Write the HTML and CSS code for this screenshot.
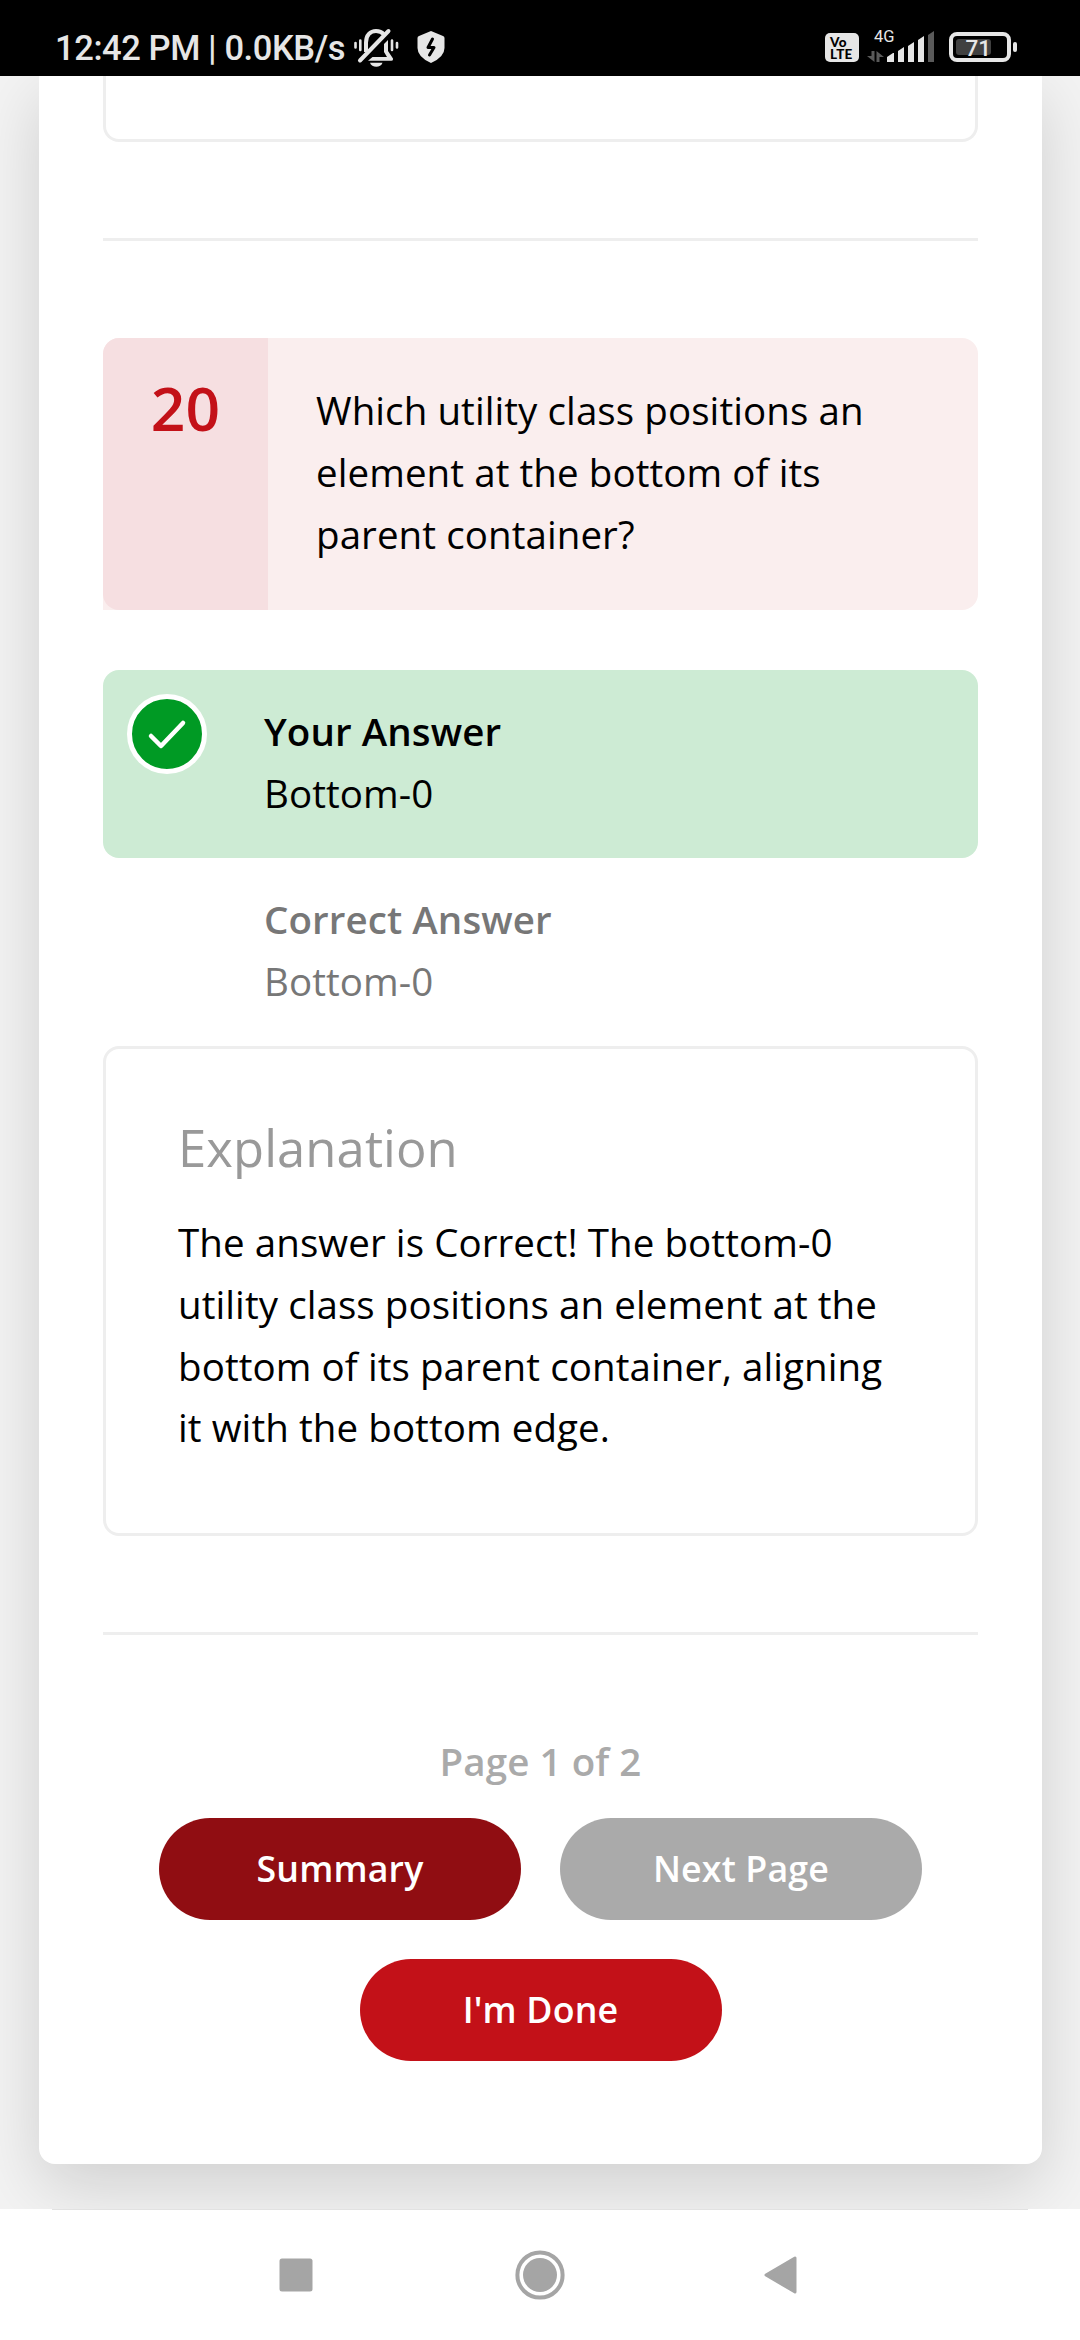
FILE: index.html
```html
<!DOCTYPE html>
<html lang="en">
<head>
<meta charset="utf-8">
<title>Quiz Review</title>
<link rel="stylesheet" href="styles.css">
</head>
<body>
<div class="screen">
  <header class="status">
    <span class="clock">12:42 PM | 0.0KB/s</span>
    <svg class="bell" width="46" height="42" viewBox="0 0 46 42" fill="none" stroke="#e6e6e6" stroke-linecap="round">
      <path d="M12 24V14.500C12 7 16.500 3 22 3c3.500 0 6 1.200 8 3.500" stroke-width="4" stroke-linecap="butt"/>
      <path d="M34 12v11l5 7.500q.500 2.200-1.500 2.200H14l4.500-3.600H33L30 24v-8z" fill="#e6e6e6" stroke="none"/>
      <path d="M6 32.500L34.500 3" stroke-width="4"/>
      <path d="M16 34.700h12.500c-1.500 5.300-11 5.300-12.500 0z" fill="#e6e6e6" stroke="none"/>
      <path d="M1.500 15v4.500M6.300 12.500v9.500M38 12.500v9.500M43 15v4.500" stroke-width="2.600"/>
    </svg>
    <svg class="shield" width="28" height="32" viewBox="0 0 28 32">
      <path d="M14 0l12 5q1.500.600 1.500 2V17q0 9-13.500 15Q.500 26 .500 17V7q0-1.400 1.500-2z" fill="#e6e6e6"/>
      <path d="M15.500 8L11 16.500h6L12.500 24" fill="none" stroke="#000" stroke-width="3" stroke-linecap="round" stroke-linejoin="round"/>
    </svg>
    <span class="spacer"></span>
    <span class="volte"><b>Vo</b><b>LTE</b></span>
    <span class="cell">
      <span class="net">4G</span>
      <svg width="68" height="32" viewBox="0 0 68 32">
        <path d="M4.500 20H7.500V31L0 25h4.500zM9.500 31V20l7.500 6h-4.500v5z" fill="#5a5a5a"/>
        <path d="M20 26l6-4h1v9h-7zM31 20l6-4v15h-6zM41 15l6-4v20h-6zM51 9l6-4v26h-6z" fill="#e6e6e6"/>
        <path d="M61 4l6-4v31h-6z" fill="#5a5a5a"/>
      </svg>
    </span>
    <span class="battery"><span class="level">71</span></span>
    <span class="tip"></span>
  </header>

  <main class="page">
    <article class="card">
      <div class="box box-prev"></div>
      <hr class="rule">
      <section class="question">
        <div class="number">20</div>
        <p class="prompt">Which utility class positions an element at the bottom of its parent container?</p>
      </section>
      <section class="answer answer-right">
        <span class="mark">
          <svg width="70" height="70" viewBox="0 0 70 70"><path d="M19 37l10 10L51 24" fill="none" stroke="#fff" stroke-width="4.500" stroke-linecap="round" stroke-linejoin="round"/></svg>
        </span>
        <div><h3 class="label">Your Answer</h3><p class="value">Bottom-0</p></div>
      </section>
      <section class="answer answer-muted">
        <div><h3 class="label">Correct Answer</h3><p class="value">Bottom-0</p></div>
      </section>
      <section class="box explanation">
        <h2 class="title">Explanation</h2>
        <p class="copy">The answer is Correct! The bottom-0 utility class positions an element at the bottom of its parent container, aligning it with the bottom edge.</p>
      </section>
      <hr class="rule">
      <p class="pager">Page 1 of 2</p>
      <div class="actions">
        <button class="btn btn-dark">Summary</button>
        <button class="btn btn-gray">Next Page</button>
        <button class="btn btn-red">I'm Done</button>
      </div>
    </article>
  </main>

  <nav class="nav">
    <svg width="34" height="34" viewBox="0 0 34 34"><rect x=".5" y=".5" width="33" height="33" rx="2.500" fill="#a5a5a5"/></svg>
    <svg class="home" width="50" height="50" viewBox="0 0 50 50"><circle cx="25" cy="25" r="22.600" fill="none" stroke="#a5a5a5" stroke-width="4"/><circle cx="25" cy="25" r="17" fill="#a5a5a5"/></svg>
    <svg width="34" height="38" viewBox="0 0 34 38"><path d="M2 19L31 2v34z" fill="#a5a5a5" stroke="#a5a5a5" stroke-width="3" stroke-linejoin="round"/></svg>
  </nav>
</div>
</body>
</html>
```
FILE: styles.css
```css
* { box-sizing: border-box; margin: 0; padding: 0; }
body { width: 1080px; height: 2340px; overflow: hidden; font-family: "Open Sans", "Noto Sans", sans-serif; font-size: 38.5px; line-height: 61.75px; letter-spacing: .08px; color: #000; }
.screen { display: flex; flex-direction: column; height: 2340px; }

.status { display: flex; align-items: flex-start; flex: none; height: 76px; padding: 0 63px 0 55px; background: #000; color: #e6e6e6; font-family: Roboto, sans-serif; letter-spacing: 0; position: relative; z-index: 1; }
.clock { width: 299px; margin-top: 28px; font-size: 34.5px; line-height: 40px; font-weight: 500; letter-spacing: -.42px; white-space: nowrap; }
.bell { margin-top: 28px; }
.shield { margin: 31px 0 0 17px; }
.spacer { flex: 1; }
.volte { display: flex; flex-direction: column; align-items: flex-start; width: 34px; height: 29px; margin-top: 33px; padding: 3px 0 0 5px; border-radius: 5px; background: #e6e6e6; color: #000; font: 900 13.5px/12px Lato, sans-serif; letter-spacing: .3px; }
.cell { display: flex; flex-direction: column; width: 68px; height: 63px; margin: 0 14px 0 8px; justify-content: flex-end; position: relative; }
.net { position: absolute; left: 7px; top: 28px; font-size: 16.5px; line-height: 18px; }
.battery { width: 62px; height: 30px; margin-top: 32px; border: 4px solid #e6e6e6; border-radius: 8px; padding: 3px; }
.level { display: flex; align-items: center; justify-content: flex-end; width: 35px; height: 16px; padding-top: 2px; border-radius: 3px; background: #404040; font-size: 22.5px; line-height: 16px; font-weight: 500; text-indent: 1px; }
.tip { width: 4px; height: 10px; margin: 42px 0 0 2px; border-radius: 2px; background: #e6e6e6; }

.page { flex: 1; min-height: 0; padding: 0 38px 0 39px; background: #f3f3f3; }
.card { height: 2088px; padding: 0 64px; background: #fff; border-radius: 0 0 16px 16px; box-shadow: 0 22px 66px rgba(0, 0, 0, .15); }
.box { border: 3px solid #eee; border-radius: 16px; }
.box-prev { height: 66px; border-top: 0; border-radius: 0 0 16px 16px; }
.rule { height: 3px; border: 0; background: #eee; margin: 96px 0 97px; }

.question { display: flex; height: 272px; border-radius: 16px 16px 16px 0; background: #faeeee; }
.number { width: 165px; padding-top: 38px; border-radius: 16px 0 0 16px; background: #f6dfe1; color: #c31118; font-size: 60.5px; line-height: 64px; font-weight: 600; text-align: center; }
.prompt { width: 600px; padding: 42px 0 0 48px; line-height: 61.9px; }

.answer { display: flex; height: 188px; padding: 30px 0 0 161px; position: relative; }
.answer-right { margin-top: 60px; border-radius: 16px; background: #cdebd4; }
.answer-muted { color: #777; }
.mark { position: absolute; left: 24px; top: 24px; width: 80px; height: 80px; border: 5px solid #fff; border-radius: 50%; background: #009a24; }
.mark svg { display: block; }
.label { font-size: 38.5px; line-height: 62px; font-weight: 600; }
.value { line-height: 63px; }

.explanation { height: 490px; padding: 66px 68px 0 72px; }
.title { font-size: 50.8px; line-height: 66px; font-weight: 400; color: #999; }
.copy { margin-top: 31px; }

.pager { margin-top: -1px; color: #aaa; font-weight: 600; text-align: center; }
.actions { display: flex; flex-wrap: wrap; justify-content: center; gap: 39px; margin-top: 25px; }
.btn { width: 362px; height: 102px; padding-bottom: 2px; border: 0; border-radius: 51px; color: #fff; font: 600 35.75px/50px "Open Sans", sans-serif; letter-spacing: .15px; }
.btn-dark { background: #900d12; }
.btn-gray { background: #aaa; }
.btn-red { background: #c31118; }

.nav { display: flex; align-items: center; flex: none; height: 131px; padding-left: 279px; background: linear-gradient(#e2e2e2, #e2e2e2) 52px 0 / 976px 1px no-repeat #fff; }
.home { margin: 0 199px 0 202px; }
```
